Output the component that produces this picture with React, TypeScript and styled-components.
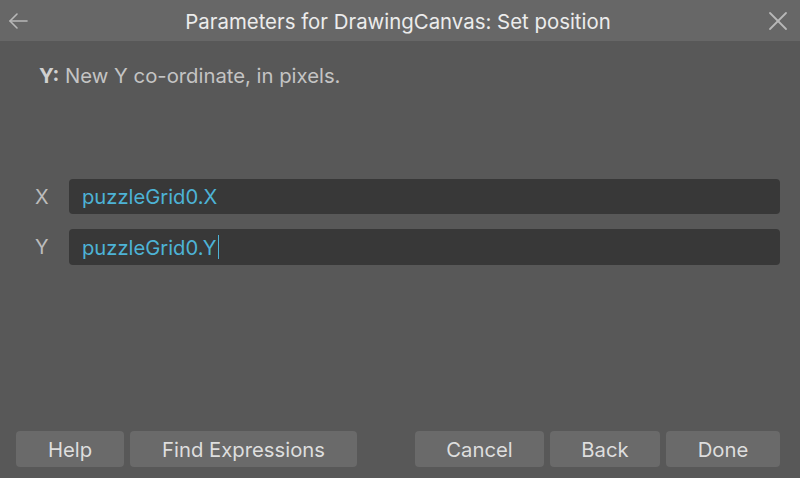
import React from "react";
import styled, { createGlobalStyle } from "styled-components";

const TITLE_BG = `#676767`;
const BODY_BG = `#585858`;
const FIELD_BG = `#383838`;
const BUTTON_BG = `#6a6a6a`;
const BLUE = `#4db3d6`;

const GlobalStyle = createGlobalStyle`
  html, body {
    margin: 0;
    padding: 0;
    background: ${BODY_BG};
  }
  body {
    font-family: Inter, "Liberation Sans", Arial, sans-serif;
  }
`;

const Window = styled.div`
  width: 800px;
  height: 478px;
  display: flex;
  flex-direction: column;
  background: ${BODY_BG};
  overflow: hidden;
`;

const TitleBar = styled.header`
  height: 41px;
  display: flex;
  align-items: center;
  justify-content: space-between;
  padding: 0 10px 0 6px;
  background: ${TITLE_BG};
  color: #ececec;
`;

const Title = styled.div`
  font-size: 20.4px;
  padding-top: 1px;
`;

const IconButton = styled.div`
  width: 24px;
  height: 24px;
  display: flex;
  align-items: center;
  justify-content: center;
  color: #b8b8b8;
`;

const Description = styled.p`
  margin: 24px 0 0 39px;
  line-height: 22px;
  font-size: 20.3px;
  color: #c4c4c4;

  b {
    color: #d0d0d0;
  }
`;

const Fields = styled.section`
  margin-top: 92px;
  display: flex;
  flex-direction: column;
  gap: 15px;
  padding: 0 20px 0 35px;
`;

const Row = styled.div`
  display: flex;
  align-items: center;
`;

const Label = styled.label`
  width: 34px;
  font-size: 20px;
  color: #bcbcbc;
`;

const Field = styled.div<{ $tall?: boolean }>`
  flex: 1;
  height: ${(p) => (p.$tall ? 36 : 35)}px;
  display: flex;
  align-items: center;
  padding-left: 13px;
  border-radius: 4px;
  background: ${FIELD_BG};
  color: ${BLUE};
  font-size: 20.2px;
`;

const Caret = styled.span`
  display: inline-block;
  width: 1px;
  height: 24px;
  margin-left: 1px;
  background: ${BLUE};
  vertical-align: middle;
`;

const Spacer = styled.div`
  flex: 1;
`;

const Footer = styled.footer`
  display: flex;
  align-items: center;
  gap: 6px;
  padding: 0 20px 11px 16px;
`;

const Button = styled.button<{ $width: number }>`
  width: ${(p) => p.$width}px;
  height: 36px;
  border: none;
  border-radius: 4px;
  background: ${BUTTON_BG};
  color: #dedede;
  font-family: inherit;
  font-size: 20.3px;
  padding: 0;
`;

export default function App(): JSX.Element {
  return (
    <Window>
      <GlobalStyle />
      <TitleBar>
        <IconButton>
          <svg width="22" height="22" viewBox="0 0 22 22" fill="none" stroke="currentColor" strokeWidth="1.6" strokeLinecap="round" strokeLinejoin="round">
            <path d="M20 11H3" />
            <path d="M10 4L3 11L10 18" />
          </svg>
        </IconButton>
        <Title>Parameters for DrawingCanvas: Set position</Title>
        <IconButton>
          <svg width="20" height="20" viewBox="0 0 20 20" fill="none" stroke="currentColor" strokeWidth="1.8" strokeLinecap="round">
            <path d="M2 2L18 18" />
            <path d="M18 2L2 18" />
          </svg>
        </IconButton>
      </TitleBar>

      <Description>
        <b>Y:</b> New Y co-ordinate, in pixels.
      </Description>

      <Fields>
        <Row>
          <Label>X</Label>
          <Field>puzzleGrid0.X</Field>
        </Row>
        <Row>
          <Label>Y</Label>
          <Field $tall>
            puzzleGrid0.Y
            <Caret />
          </Field>
        </Row>
      </Fields>

      <Spacer />

      <Footer>
        <Button $width={108}>Help</Button>
        <Button $width={227}>Find Expressions</Button>
        <Spacer />
        <Button $width={129}>Cancel</Button>
        <Button $width={110}>Back</Button>
        <Button $width={114}>Done</Button>
      </Footer>
    </Window>
  );
}
